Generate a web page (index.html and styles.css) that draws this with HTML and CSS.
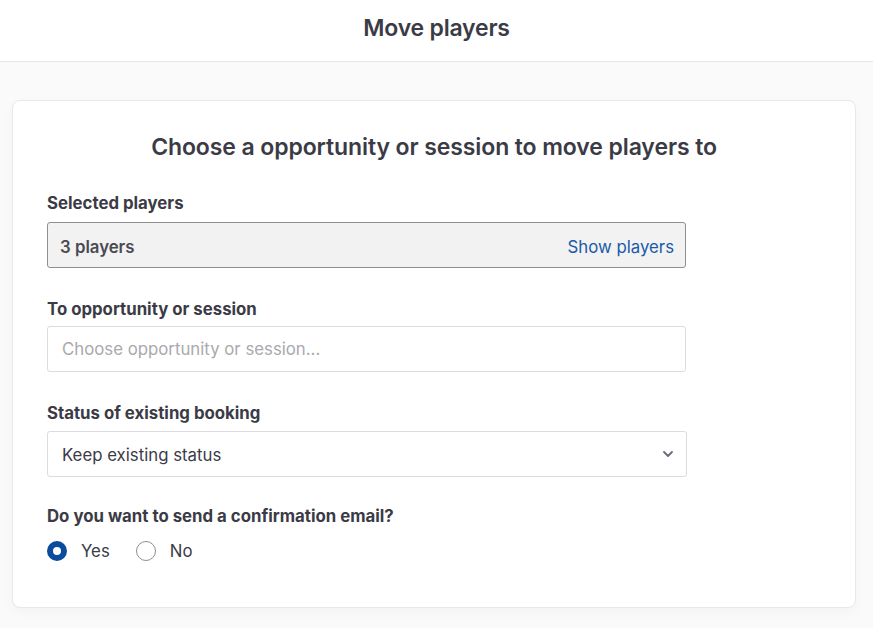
FILE: index.html
```html
<!DOCTYPE html>
<html lang="en">
<head>
<meta charset="utf-8">
<title>Move players</title>
<link rel="stylesheet" href="styles.css">
</head>
<body>
<header class="topbar">
  <h1 class="topbar-title">Move players</h1>
</header>
<main class="page">
  <section class="card">
    <h2 class="card-title">Choose a opportunity or session to move players to</h2>

    <div class="field">
      <div class="label">Selected players</div>
      <div class="selected-box">
        <span class="selected-count">3 players</span>
        <a class="link" href="#">Show players</a>
      </div>
    </div>

    <div class="field">
      <div class="label label-close">To opportunity or session</div>
      <div class="input">
        <span class="placeholder">Choose opportunity or session...</span>
      </div>
    </div>

    <div class="field field-tight">
      <div class="label label-mid">Status of existing booking</div>
      <div class="input select">
        <span class="value">Keep existing status</span>
        <svg class="chevron" width="12" height="8" viewBox="0 0 12 8"><path d="M2 2 L6 6 L10 2" fill="none" stroke="#6b6b7b" stroke-width="1.8" stroke-linecap="round" stroke-linejoin="round"/></svg>
      </div>
    </div>

    <div class="field">
      <div class="label">Do you want to send a confirmation email?</div>
      <div class="radios">
        <label class="radio"><span class="dot checked"></span><span>Yes</span></label>
        <label class="radio"><span class="dot"></span><span>No</span></label>
      </div>
    </div>
  </section>
</main>
</body>
</html>
```

FILE: styles.css
```css
* { box-sizing: border-box; }
html, body { margin: 0; padding: 0; }
body {
  font-family: Inter, "Noto Sans", sans-serif;
  color: #3b3b46;
  background: #fafafa;
  width: 873px;
  height: 628px;
  overflow: hidden;
}
.topbar {
  height: 62px;
  background: #ffffff;
  border-bottom: 1px solid #e6e6e8;
  display: flex;
  align-items: center;
  justify-content: center;
}
.topbar-title {
  margin: 0;
  font-size: 23px;
  font-weight: 600;
  color: #3b3b46;
  letter-spacing: -0.2px;
  padding-bottom: 6px;
}
.page {
  padding: 38px 17px 0 12px;
}
.card {
  background: #ffffff;
  border: 1px solid #e8e8ec;
  border-radius: 8px;
  box-shadow: 0 4px 12px rgba(0,0,0,0.03);
  padding: 31px 34px 34px 34px;
  height: 508px;
}
.card-title {
  margin: 0 0 30px 0;
  text-align: center;
  font-size: 23px;
  font-weight: 600;
  color: #3b3b46;
  letter-spacing: -0.1px;
  line-height: 30px;
}
.field {
  width: 639px;
  margin-bottom: 30px;
}
.field-tight { margin-bottom: 28px; }
.label {
  font-size: 16.8px;
  font-weight: 700;
  line-height: 22px;
  margin-bottom: 8px;
  color: #3b3b46;
}
.label-close { margin-bottom: 6px; }
.label-mid { margin-bottom: 7px; }
.selected-box {
  height: 46px;
  background: #f2f2f2;
  border: 1px solid #8f8f92;
  border-radius: 3px;
  display: flex;
  align-items: center;
  justify-content: space-between;
  padding: 3px 11px 0 12px;
}
.selected-count {
  font-size: 16.8px;
  font-weight: 600;
  color: #4a4a52;
}
.link {
  font-size: 16.8px;
  color: #1a5aa8;
  text-decoration: none;
}
.input {
  height: 46px;
  border: 1px solid #dcdce0;
  border-radius: 3px;
  background: #fff;
  display: flex;
  align-items: center;
  padding: 0 14px;
  font-size: 16.8px;
}
.placeholder { color: #a9a9ae; }
.value { color: #3b3b46; }
.select {
  width: 640px;
  justify-content: space-between;
  padding: 2px 12px 0 14px;
}
.chevron { display: block; margin-top: -2px; }
.radios {
  display: flex;
  gap: 26px;
  margin-top: 14px;
  align-items: center;
}
.radio {
  display: flex;
  align-items: center;
  gap: 14px;
  font-size: 16.8px;
  color: #3b3b46;
}
.dot {
  width: 20px;
  height: 20px;
  border-radius: 50%;
  border: 1px solid #8e8e96;
  background: #fff;
  display: inline-block;
}
.dot.checked {
  border: 6px solid #0b4b9e;
  background: #fff;
}
```
